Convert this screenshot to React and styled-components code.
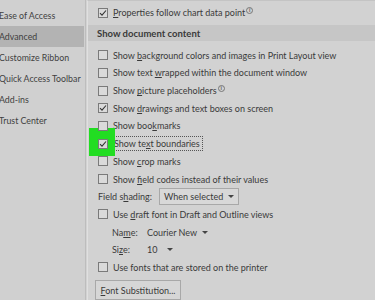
import styled, { createGlobalStyle } from "styled-components";

const GlobalStyle = createGlobalStyle`
  html, body {
    margin: 0;
    padding: 0;
    background: #d2d2d2;
  }
  body {
    font-family: Lato, "Noto Sans", sans-serif;
    color: #3a3a3a;
  }
`;

const Frame = styled.div`
  width: 375px;
  height: 300px;
  display: flex;
  overflow: hidden;
  font-size: 9px;
`;

const Sidebar = styled.div`
  width: 85px;
  flex-shrink: 0;
  background: #d0d0d0;
  border-right: 1px solid #bdbdbd;
  display: flex;
  flex-direction: column;
  padding-top: 5px;
  overflow: hidden;
`;

const NavItem = styled.div`
  height: 21px;
  line-height: 21px;
  margin-left: -1px;
  font-size: 8.8px;
  white-space: nowrap;
  color: #404040;
  background: ${(p) => (p.active ? "#b3b3b3" : "transparent")};
  margin-right: ${(p) => (p.active ? "1px" : "0")};
`;

const Main = styled.div`
  flex: 1;
  border-left: 1px solid #e0e0e0;
  margin-left: 1px;
  display: flex;
  flex-direction: column;
  padding-top: 3px;
  border-top: 1px solid #c4c4c4;
`;

const Row = styled.div`
  height: 18px;
  display: flex;
  align-items: center;
  padding-left: ${(p) => p.indent || 10}px;
  white-space: nowrap;
  position: relative;
`;

const Header = styled.div`
  height: 17px;
  margin-top: 3px;
  margin-bottom: 5px;
  display: flex;
  align-items: center;
  padding-left: 9px;
  background: #c6c6c6;
  font-weight: 700;
  font-size: 9.5px;
  color: #3a3a3a;
`;

const Box = styled.span`
  width: 10px;
  height: 10px;
  box-sizing: border-box;
  border: 1px solid #7a7a7a;
  background: #dadada;
  margin-right: 5px;
  flex-shrink: 0;
  display: flex;
  align-items: center;
  justify-content: center;
  position: relative;
  z-index: 1;
`;

const Highlight = styled.span`
  position: absolute;
  left: 1px;
  top: -7px;
  width: 26px;
  height: 28px;
  background: #22dd22;
`;

const Focus = styled.span`
  outline: 1px dotted #555;
  outline-offset: 1px;
  padding: 0 1px;
`;

const Info = styled.span`
  font-size: 6px;
  margin-left: 1px;
  border: 1px solid #777;
  border-radius: 50%;
  width: 7px;
  height: 7px;
  display: inline-flex;
  align-items: center;
  justify-content: center;
  line-height: 1;
  box-sizing: border-box;
  position: relative;
  top: -4px;
`;

const Label = styled.span`
  width: ${(p) => p.w}px;
  flex-shrink: 0;
`;

const Select = styled.span`
  display: inline-flex;
  align-items: center;
  gap: 5px;
  height: 15px;
  padding: 0 4px;
  border: 1px solid ${(p) => (p.boxed ? "#a8a8a8" : "transparent")};
  background: ${(p) => (p.boxed ? "#d8d8d8" : "transparent")};
`;

const Caret = styled.span`
  width: 0;
  height: 0;
  border-left: 3px solid transparent;
  border-right: 3px solid transparent;
  border-top: 3px solid #444;
  margin-left: ${(p) => p.gap || 0}px;
`;

const Button = styled.div`
  margin: 4px 0 0 7px;
  width: 86px;
  height: 20px;
  box-sizing: border-box;
  border: 1px solid #a8a8a8;
  background: #d6d6d6;
  display: flex;
  align-items: center;
  justify-content: center;
  white-space: nowrap;
`;

const U = styled.span`
  text-decoration: underline;
`;

const Check = () => (
  <svg width="8" height="8" viewBox="0 0 8 8">
    <path d="M1 4.2 L3 6.2 L7 1.5" fill="none" stroke="#333" strokeWidth="1.1" />
  </svg>
);

const CheckRow = ({ checked, children, highlight }) => (
  <Row>
    {highlight && <Highlight />}
    <Box>{checked && <Check />}</Box>
    {children}
  </Row>
);

const navItems = [
  "Ease of Access",
  "Advanced",
  "Customize Ribbon",
  "Quick Access Toolbar",
  "Add-ins",
  "Trust Center",
];

export default function App() {
  return (
    <>
      <GlobalStyle />
      <Frame>
        <Sidebar>
          {navItems.map((item) => (
            <NavItem key={item} active={item === "Advanced"}>
              {item}
            </NavItem>
          ))}
        </Sidebar>
        <Main>
          <CheckRow checked>
            <span>
              <U>P</U>roperties follow chart data point<Info>i</Info>
            </span>
          </CheckRow>
          <Header>Show document content</Header>
          <CheckRow>
            <span>
              Show <U>b</U>ackground colors and images in Print Layout view
            </span>
          </CheckRow>
          <CheckRow>
            <span>
              Show text <U>w</U>rapped within the document window
            </span>
          </CheckRow>
          <CheckRow>
            <span>
              Show <U>p</U>icture placeholders<Info>i</Info>
            </span>
          </CheckRow>
          <CheckRow checked>
            <span>
              Show <U>d</U>rawings and text boxes on screen
            </span>
          </CheckRow>
          <CheckRow>
            <span>
              Show boo<U>k</U>marks
            </span>
          </CheckRow>
          <CheckRow checked highlight>
            <Focus>Show te<U>x</U>t boundaries</Focus>
          </CheckRow>
          <CheckRow>
            <span>
              Show <U>c</U>rop marks
            </span>
          </CheckRow>
          <CheckRow>
            <span>
              Show <U>f</U>ield codes instead of their values
            </span>
          </CheckRow>
          <Row>
            <Label w={61}>
              Field s<U>h</U>ading:
            </Label>
            <Select boxed>
              When selected
              <Caret />
            </Select>
          </Row>
          <CheckRow>
            <span>
              Use <U>d</U>raft font in Draft and Outline views
            </span>
          </CheckRow>
          <Row indent={24}>
            <Label w={30}>
              Na<U>m</U>e:
            </Label>
            <Select>
              Courier New
              <Caret />
            </Select>
          </Row>
          <Row indent={24}>
            <Label w={30}>
              Si<U>z</U>e:
            </Label>
            <Select>
              10
              <Caret gap={5} />
            </Select>
          </Row>
          <CheckRow>
            <span>Use fonts that are stored on the printer</span>
          </CheckRow>
          <Button>
            <span>
              <U>F</U>ont Substitution...
            </span>
          </Button>
        </Main>
      </Frame>
    </>
  );
}
